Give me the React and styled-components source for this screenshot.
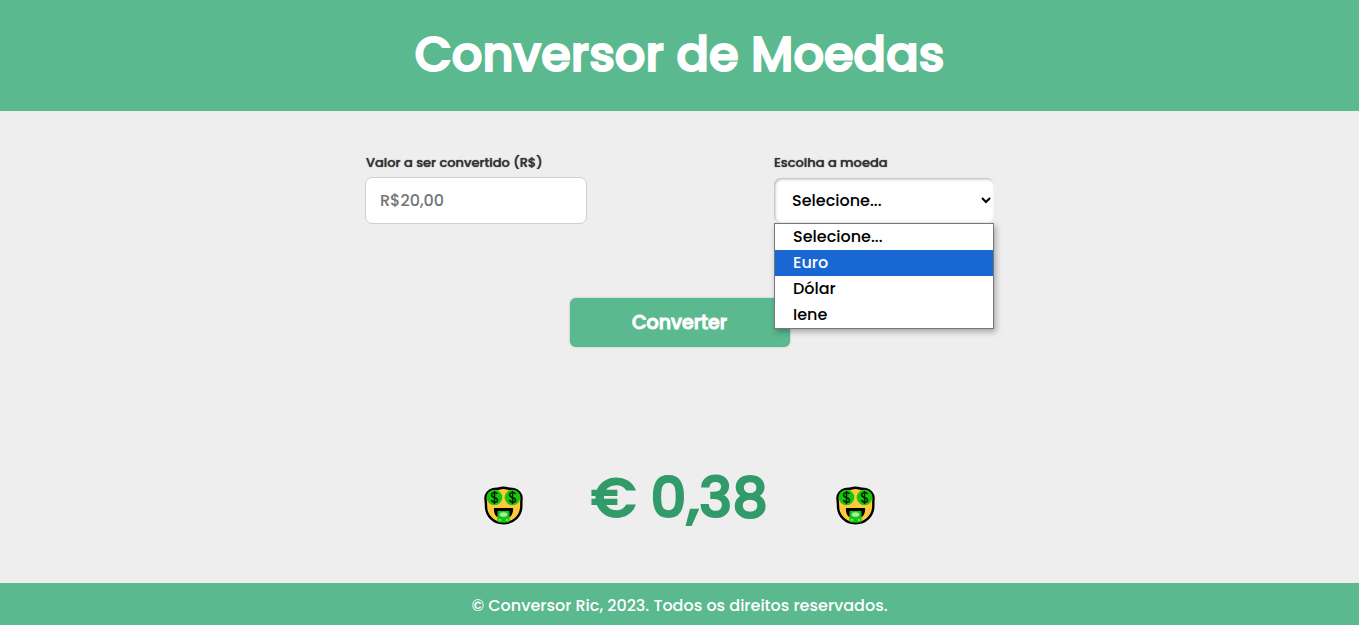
import React from "react";
import styled, { createGlobalStyle } from "styled-components";

const green = "#5bb98f";

const GlobalStyle = createGlobalStyle`
  *, *::before, *::after { box-sizing: border-box; }
  body {
    margin: 0;
    background: #eeeeee;
    font-family: Poppins, Inter, "Open Sans", sans-serif;
    font-weight: 500;
  }
`;

const Page = styled.div`
  min-height: 100vh;
  display: flex;
  flex-direction: column;
`;

const Header = styled.header`
  padding: 17px 16px 19px;
  background: ${green};
  text-align: center;
`;

const Title = styled.h1`
  margin: 0;
  color: #fff;
  font-size: 48px;
  line-height: 75px;
  font-weight: 500;
  -webkit-text-stroke: 2px #fff;
`;

const Main = styled.main`
  flex: 1;
  display: flex;
  flex-direction: column;
  align-items: center;
  padding: 40px 16px 0;
`;

const Form = styled.form`
  width: 100%;
  max-width: 629px;
  display: flex;
  flex-direction: column;
  align-items: center;
  gap: 74px;
`;

const Fields = styled.div`
  width: 100%;
  display: flex;
  justify-content: space-between;
`;

const Field = styled.div`
  position: relative;
  width: ${(p) => p.$width};
  display: flex;
  flex-direction: column;
  gap: 3px;
`;

const Label = styled.label`
  padding-left: ${(p) => (p.$inset ? "1px" : "0")};
  color: #333;
  font-size: 13px;
  line-height: 23px;
  font-weight: 500;
  text-shadow: 0 0 1px #333;
`;

const ValueInput = styled.input`
  width: 100%;
  height: 47px;
  padding: 0 14px;
  border: 1px solid #cfcfcf;
  border-radius: 7px;
  background: #fff;
  font: 500 16px/24px Poppins, Inter, sans-serif;
  &::placeholder { color: #757575; opacity: 1; }
`;

const Select = styled.select`
  width: 100%;
  height: 45px;
  margin-top: 1px;
  padding: 0 0 0 14px;
  border: 0;
  border-radius: 7px;
  background-color: #fff;
  box-shadow: inset 1px 1px 3px #aaa;
  color: #000;
  font: 500 16px/24px Poppins, Inter, sans-serif;
`;

const Menu = styled.ul`
  position: absolute;
  top: 72px;
  left: 0;
  right: 0;
  z-index: 1;
  margin: 0;
  padding: 0;
  list-style: none;
  border: 1px solid #767676;
  background: #fff;
  box-shadow: 2px 3px 6px rgba(0, 0, 0, 0.3);
`;

const MenuItem = styled.li`
  padding: 0 18px;
  background: ${(p) => (p.$active ? "#1967d2" : "#fff")};
  color: ${(p) => (p.$active ? "#fff" : "#000")};
  font-size: 16px;
  line-height: 26px;
`;

const ConvertButton = styled.button`
  width: 220px;
  height: 49px;
  padding: 1px 0 0;
  border: 0;
  border-radius: 6px;
  background: ${green};
  box-shadow: 0 0 2px #aaa;
  color: #fff;
  font: 500 19px/28px Poppins, Inter, sans-serif;
  -webkit-text-stroke: 1px #fff;
`;

const Result = styled.section`
  display: flex;
  align-items: center;
  justify-content: center;
  gap: 68px;
  margin-top: 106px;
`;

const Amount = styled.output`
  color: #319b69;
  font-size: 56px;
  line-height: 90px;
  font-weight: 500;
  -webkit-text-stroke: 2px #319b69;
  white-space: nowrap;
`;

const Emoji = styled.svg`
  width: 39px;
  height: 39px;
  margin-top: 14px;
`;

const Footer = styled.footer`
  padding: 11px 16px 7px;
  background: ${green};
  color: #fff;
  font-size: 16px;
  line-height: 24px;
  font-weight: 500;
  text-align: center;
`;

const dollar = "M3 -3C2 -5 -3 -5 -3 -2C-3 1 3 0 3 3C3 6 -2 6 -3 3M0 -6V7";

function MoneyFace() {
  return (
    <Emoji viewBox="0 0 39 39" aria-hidden="true">
      <path
        d="M9 3.200C12 2.500 13.500 3 15 2.500C18 1.600 21 1.600 24 2.500C25.500 3 27 2.500 30 3.200C34.500 4.500 38 8 37.500 13C37.300 16 37.300 17 37.300 20C37.300 30 29.500 37.200 19.500 37.200C9.500 37.200 2 30 2 20C2 17 1.800 16 1.500 13C1 8 4.500 4.500 9 3.200Z"
        fill="#ffc83d"
        stroke="#000"
        strokeWidth="2.400"
      />
      <circle cx="10.500" cy="11.500" r="7.800" fill="#16c60c" />
      <circle cx="28.500" cy="11.500" r="7.800" fill="#16c60c" />
      <path d={dollar} transform="translate(10.500 11)" fill="none" stroke="#021c04" strokeWidth="1.500" />
      <path d={dollar} transform="translate(28.500 11)" fill="none" stroke="#021c04" strokeWidth="1.500" />
      <path d="M10 22H29C29.500 26 28 30 25 31.500H14C11 30 9.500 26 10 22Z" fill="#000" />
      <path d="M13.500 25H25.500V36C22 37 17 37 13.500 36Z" fill="#16c60c" />
      <ellipse cx="19.500" cy="28.500" rx="3.800" ry="2.300" fill="#a7eda2" />
      <circle cx="16" cy="34" r="1" fill="#a7eda2" />
      <circle cx="23" cy="34" r="1" fill="#a7eda2" />
    </Emoji>
  );
}

const currencies = ["Selecione...", "Euro", "Dólar", "Iene"];

export default function App() {
  return (
    <Page>
      <GlobalStyle />
      <Header>
        <Title>Conversor de Moedas</Title>
      </Header>
      <Main>
        <Form onSubmit={(e) => e.preventDefault()}>
          <Fields>
            <Field $width="222px">
              <Label htmlFor="valor" $inset>Valor a ser convertido (R$)</Label>
              <ValueInput id="valor" type="text" placeholder="R$20,00" />
            </Field>
            <Field $width="220px">
              <Label htmlFor="moeda">Escolha a moeda</Label>
              <Select id="moeda" defaultValue="Selecione...">
                {currencies.map((name) => (
                  <option key={name}>{name}</option>
                ))}
              </Select>
              <Menu role="listbox" aria-label="Moedas">
                {currencies.map((name) => (
                  <MenuItem key={name} role="option" aria-selected={name === "Euro"} $active={name === "Euro"}>
                    {name}
                  </MenuItem>
                ))}
              </Menu>
            </Field>
          </Fields>
          <ConvertButton type="submit">Converter</ConvertButton>
        </Form>
        <Result>
          <MoneyFace />
          <Amount>€ 0,38</Amount>
          <MoneyFace />
        </Result>
      </Main>
      <Footer>© Conversor Ric, 2023. Todos os direitos reservados.</Footer>
    </Page>
  );
}
